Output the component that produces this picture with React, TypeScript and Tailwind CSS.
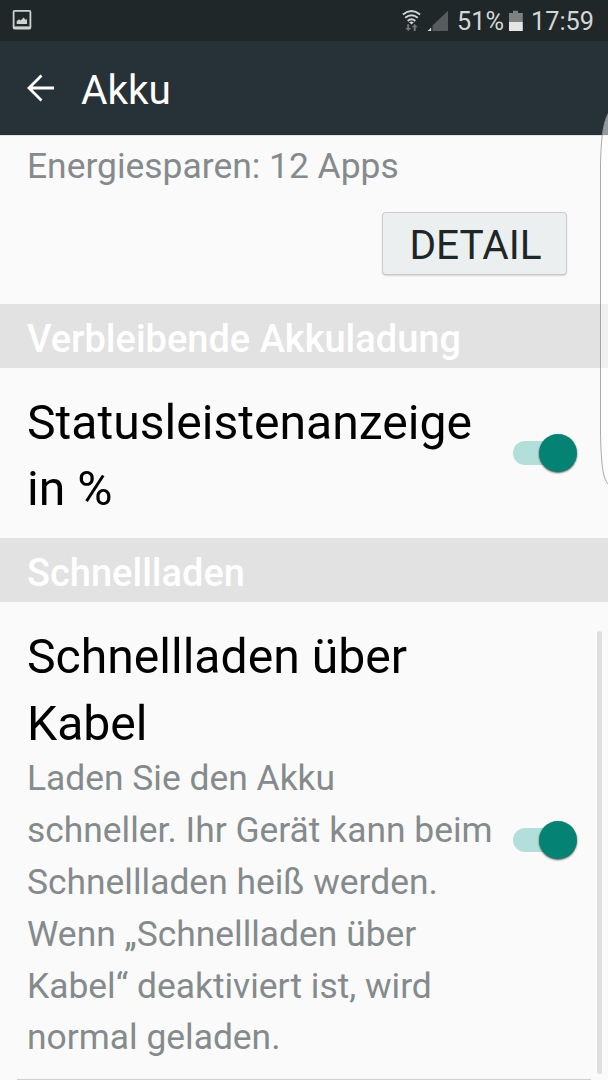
import type { ReactNode } from "react";

function SectionHeader({ children }: { children: ReactNode }) {
  return (
    <h2 className="h-16 bg-[#e2e2e2] pl-[27px] pt-[3px] text-[38px] font-medium leading-[64px] text-white">
      {children}
    </h2>
  );
}

function Toggle() {
  return (
    <button role="switch" aria-checked="true" className="flex h-10 w-16 shrink-0 items-center rounded-full">
      <span className="h-6 w-11 shrink-0 rounded-full bg-[#b2dfda]" />
      <span className="-ml-[18px] size-[38px] shrink-0 rounded-full bg-[#048375] shadow-[0_1px_2px_rgba(0,0,0,0.65)]" />
    </button>
  );
}

function StatusBar() {
  return (
    <div className="flex h-[41px] items-center bg-[#1f2729] text-[25.3px] text-[#d4d6d6]">
      <svg className="-mt-0.5 ml-3" width="20" height="22" viewBox="0 0 20 22">
        <rect x="1.6" y="1.8" width="16.8" height="17.8" rx="1" fill="none" stroke="#cfd1d1" strokeWidth="1.8" />
        <path d="M4.7 15v-2.8l2.3-2 1.6 1.4 3-3.2 1.9 2.3 1.5-.6V15z" fill="#cfd1d1" />
        <path d="M1.5 18.6h17" stroke="#cfd1d1" strokeWidth="2.4" />
      </svg>
      <svg className="ml-[369px] shrink-0" width="22" height="24" viewBox="401 8 22 24">
        <g fill="none" stroke="#d4d6d6" strokeWidth="1.9">
          <path d="M402.9 13.4Q411.5 6.5 420.1 13.4" />
          <path d="M405.2 16.8Q411.5 11.8 417.8 16.8" />
          <path d="M407.7 20Q411.5 16.7 415.3 20" />
        </g>
        <path d="M409.2 21.2Q411.5 19.7 413.8 21.2L411.5 23.4z" fill="#d4d6d6" />
        <path d="M407.2 23.3h2v3.6h2L408.2 30l-3-3.1h2zM413.7 30v-3.8h-2l3-3.1 3 3.1h-2V30z" fill="#72787a" />
      </svg>
      <svg className="ml-1 shrink-0" width="22" height="24" viewBox="427 8 22 24">
        <path d="M432.5 24.5L448 9.7V30h-15.5z" fill="#565c5e" />
        <path d="M427.5 30l3.7-3.6V30z" fill="#d4d6d6" />
      </svg>
      <span className="ml-2 w-[46px] shrink-0 pt-px leading-[41px]">51%</span>
      <svg className="ml-[5px] shrink-0" width="16" height="24" viewBox="508 8 16 24">
        <path d="M509 12h4V9.8h5V12h4.8v9H509z" fill="#7c8183" />
        <path d="M509 21h13.8v9H509z" fill="#e4e5e5" />
      </svg>
      <span className="ml-[7px] pt-px leading-[41px]">17:59</span>
    </div>
  );
}

export default function App() {
  return (
    <main className="relative h-[1080px] w-[608px] overflow-hidden whitespace-nowrap bg-[#fafafa] font-['Roboto',sans-serif] text-[#1e2628]">
      <StatusBar />
      <header className="flex h-[94px] items-center bg-[#273238] text-white">
        <svg className="ml-[26px]" width="30" height="30" viewBox="0 0 30 30" fill="none" stroke="currentColor" strokeWidth="2.8">
          <path d="M28 15H3M15.5 2.5L3 15l12.5 12.5" />
        </svg>
        <h1 className="ml-[25px] pt-[3px] text-[40.6px] leading-[50px]">Akku</h1>
      </header>
      <section className="flex h-[169px] flex-col border-t border-[#dfe1e2] pt-1">
        <p className="pl-[27px] text-[35.4px] leading-[52px] text-[#858a8c]">Energiesparen: 12 Apps</p>
        <button className="mr-[42px] mt-[21px] flex h-[61px] w-[183px] items-center justify-center self-end rounded-[3px] bg-[#eceff0] pl-0.5 pt-[3px] text-[40.6px] leading-[50px] shadow-[0_0_0_1px_#c9cccd,0_1px_2px_rgba(0,0,0,0.45)]">
          DETAIL
        </button>
      </section>
      <SectionHeader>Verbleibende Akkuladung</SectionHeader>
      <section className="flex h-[170px] items-center justify-between pl-[27px] pr-[31px]">
        <h3 className="pt-[6px] text-[48.1px] leading-[66.5px] text-black">
          Statusleistenanzeige
          <br />
          in %
        </h3>
        <Toggle />
      </section>
      <SectionHeader>Schnellladen</SectionHeader>
      <section className="mx-[17px] flex h-[478px] items-start justify-between border-b border-[#cfd0d0] pl-2.5 pr-3.5 pt-[22px]">
        <div>
          <h3 className="text-[48.1px] leading-[66.5px] text-black">
            Schnellladen über
            <br />
            Kabel
          </h3>
          <p className="-mt-[3.7px] text-[35.4px] leading-[51.8px] text-[#858a8c]">
            Laden Sie den Akku
            <br />
            schneller. Ihr Gerät kann beim
            <br />
            Schnellladen heiß werden.
            <br />
            Wenn „Schnellladen über
            <br />
            Kabel“ deaktiviert ist, wird
            <br />
            normal geladen.
          </p>
        </div>
        <div className="mt-[196px]">
          <Toggle />
        </div>
      </section>
      <span className="absolute right-[6px] top-[631px] h-[443px] w-[5px] rounded-full bg-[#dfdfdf]" />
      <svg className="absolute right-0 top-[105px]" width="12" height="385" viewBox="596 105 12 385">
        <path d="M609 112C603 122 601 138 600.5 165V430C601 465 603 480 609 485" fill="#fff" fillOpacity=".5" stroke="#8a8f91" strokeOpacity=".75" />
      </svg>
    </main>
  );
}
